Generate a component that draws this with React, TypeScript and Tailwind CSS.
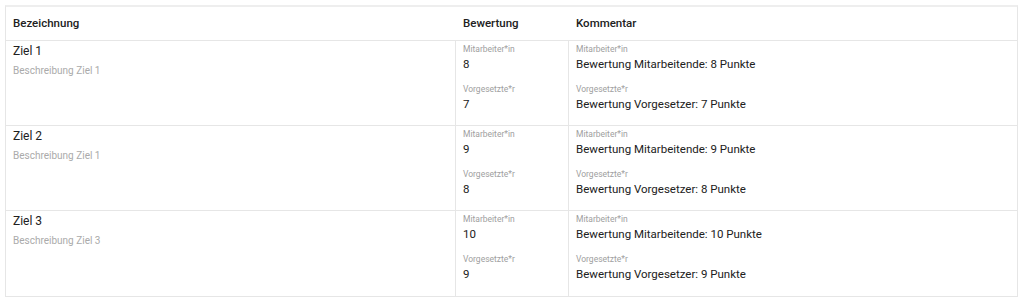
import React from 'react';

const rows = [
  { title: 'Ziel 1', desc: 'Beschreibung Ziel 1', emp: '8', sup: '7' },
  { title: 'Ziel 2', desc: 'Beschreibung Ziel 1', emp: '9', sup: '8' },
  { title: 'Ziel 3', desc: 'Beschreibung Ziel 3', emp: '10', sup: '9' },
];

function Labeled({ label, value }: { label: string; value: string }) {
  return (
    <div className="flex flex-col">
      <span className="text-[8.5px] leading-[10px] text-[#a0a0a0]">{label}</span>
      <span className="mt-[2px] text-[11.5px] leading-[16px] text-[#212121]">{value}</span>
    </div>
  );
}

export default function App() {
  return (
    <div className="w-[1024px] h-[302px] bg-white pt-[5px] pl-[5px] pr-[6px] font-['Roboto',sans-serif]">
      <div className="border border-[#e6e6e6] border-t-2 border-t-[#eeeeee]">
        {/* header */}
        <div className="grid grid-cols-[450px_113px_1fr] h-[34px] items-center border-b border-[#e6e6e6] text-[11.5px] font-medium text-[#212121]">
          <div className="px-[7px]">Bezeichnung</div>
          <div className="px-[7px]">Bewertung</div>
          <div className="px-[7px]">Kommentar</div>
        </div>

        {rows.map((r, i) => (
          <div
            key={r.title}
            className={`grid grid-cols-[450px_113px_1fr] h-[85px] ${i < rows.length - 1 ? 'border-b border-[#e6e6e6]' : ''}`}
          >
            <div className="px-[7px] pt-[2px] flex flex-col border-r border-[#e6e6e6]">
              <span className="text-[12px] leading-[16px] text-[#212121]">{r.title}</span>
              <span className="mt-[5px] text-[10px] leading-[14px] text-[#aaaaaa]">{r.desc}</span>
            </div>
            <div className="px-[7px] pt-[3px] flex flex-col gap-[12px] border-r border-[#e6e6e6]">
              <Labeled label="Mitarbeiter*in" value={r.emp} />
              <Labeled label="Vorgesetzte*r" value={r.sup} />
            </div>
            <div className="px-[7px] pt-[3px] flex flex-col gap-[12px]">
              <Labeled label="Mitarbeiter*in" value={`Bewertung Mitarbeitende: ${r.emp} Punkte`} />
              <Labeled label="Vorgesetzte*r" value={`Bewertung Vorgesetzer: ${r.sup} Punkte`} />
            </div>
          </div>
        ))}
      </div>
    </div>
  );
}
